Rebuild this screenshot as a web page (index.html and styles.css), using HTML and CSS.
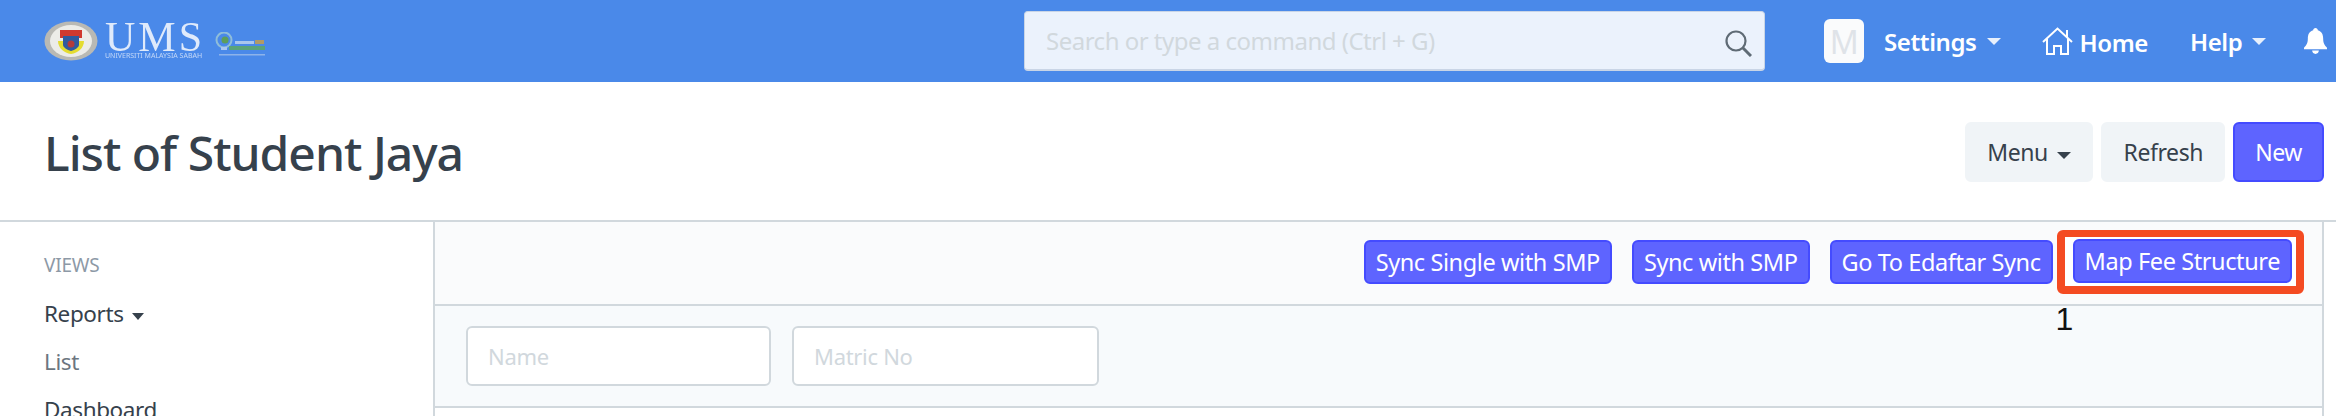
FILE: index.html
```html
<!DOCTYPE html>
<html lang="en">
<head>
    <meta charset="UTF-8">
    <meta name="viewport" content="width=device-width, initial-scale=1.0">
    <title>List of Student Jaya</title>
    <link rel="stylesheet" href="styles.css">
</head>
<body>
    <nav class="navbar">
        <div class="logo">
            <svg class="logo-crest" viewBox="0 0 54 40" width="54" height="40">
                <ellipse cx="27" cy="20" rx="26.500" ry="19.500" fill="#b9b9b4"/>
                <ellipse cx="27" cy="20" rx="21" ry="16" fill="#ecece8"/>
                <path d="M16 9h22v8H16z" fill="#d0392f"/>
                <path d="M14 20h26c0 7-6 12-13 13-7-1-13-6-13-13z" fill="#e4dc30"/>
                <path d="M19 15h16v9c0 2-4 5-8 6-4-1-8-4-8-6z" fill="#2f5a9f"/>
                <circle cx="27" cy="23" r="3.500" fill="#b33a3a"/>
            </svg>
            <div class="logo-word">
                <span class="logo-ums">UMS</span>
                <span class="logo-sub">UNIVERSITI MALAYSIA SABAH</span>
            </div>
            <svg class="logo-green" viewBox="0 0 52 25" width="52" height="25">
                <circle cx="9" cy="8" r="7.500" fill="none" stroke="#8fbdd9" stroke-width="2"/>
                <circle cx="10" cy="8" r="3.500" fill="#5d9e5a"/>
                <rect x="20" y="9" width="19" height="3" fill="#a9c6ee"/>
                <rect x="40" y="8" width="9" height="4" fill="#b09a66"/>
                <rect x="6" y="15" width="6" height="3" fill="#a9c6ee"/>
                <rect x="14" y="14" width="36" height="4" fill="#5aa37a"/>
                <rect x="4" y="22" width="46" height="1.500" fill="#8db3ea"/>
            </svg>
        </div>
        <div class="search">
            <input class="search-input" type="text" placeholder="Search or type a command (Ctrl + G)">
            <svg class="search-icon" viewBox="0 0 28 28" width="28" height="28">
                <circle cx="12" cy="12" r="9.500" fill="none" stroke="#5f6b75" stroke-width="2.200"/>
                <path d="M19 19l8 8" stroke="#5f6b75" stroke-width="3"/>
            </svg>
        </div>
        <div class="nav-right">
            <span class="avatar">M</span>
            <a class="nav-link nav-settings">Settings <i class="caret caret-white"></i></a>
            <a class="nav-link nav-home">
                <svg viewBox="0 0 31 28" width="31" height="28">
                    <path d="M1 15L15.500 1.500 30 15M25 10V3M5 12v15h7v-8h7v8h7V12" fill="none" stroke="#fff" stroke-width="2"/>
                </svg>
                <span>Home</span>
            </a>
            <a class="nav-link nav-help">Help <i class="caret caret-white"></i></a>
            <svg class="bell" viewBox="0 0 24 27" width="23" height="26">
                <path d="M12 0c1.400 0 2.400 1 2.400 2.400 4 1 5.600 4.400 5.600 8.600 0 5 1.600 7.400 4 9.500v1.500H0v-1.500c2.400-2.100 4-4.500 4-9.500 0-4.200 1.600-7.600 5.600-8.600C9.600 1 10.600 0 12 0zM8.500 23.500h7C15.500 25.500 14 27 12 27s-3.500-1.500-3.500-3.500z" fill="#fff"/>
            </svg>
        </div>
    </nav>

    <header class="page-head">
        <h1>List of Student Jaya</h1>
        <div class="page-actions">
            <button class="btn btn-default btn-menu">Menu <i class="caret caret-dark"></i></button>
            <button class="btn btn-default">Refresh</button>
            <button class="btn btn-primary">New</button>
        </div>
    </header>

    <div class="layout">
        <aside class="sidebar">
            <div class="sidebar-label">VIEWS</div>
            <div class="sidebar-item">Reports <i class="caret caret-dark caret-small"></i></div>
            <div class="sidebar-item sidebar-muted">List</div>
            <div class="sidebar-item">Dashboard</div>
        </aside>
        <main class="main">
            <div class="toolbar">
                <button class="btn btn-primary btn-sm">Sync Single with SMP</button>
                <button class="btn btn-primary btn-sm">Sync with SMP</button>
                <button class="btn btn-primary btn-sm">Go To Edaftar Sync</button>
                <div class="marked">
                    <button class="btn btn-primary btn-sm">Map Fee Structure</button>
                    <span class="marked-num">1</span>
                </div>
            </div>
            <div class="filters">
                <input class="filter-input" type="text" placeholder="Name">
                <input class="filter-input filter-wide" type="text" placeholder="Matric No">
            </div>
        </main>
    </div>
</body>
</html>
```
FILE: styles.css
```css
* {
    box-sizing: border-box;
}
html, body {
    height: 416px;
    overflow: hidden;
}
body {
    margin: 0;
    font-family: "Noto Sans", "Open Sans", sans-serif;
    font-size: 23px;
    letter-spacing: -0.4px;
    color: #36414c;
    background: #fff;
}
.navbar {
    height: 82px;
    background: #4a89e9;
    display: flex;
    align-items: center;
}
.logo {
    width: 1024px;
    padding-left: 44px;
    display: flex;
    align-items: center;
    filter: blur(0.5px);
}
.logo-crest {
    flex: none;
}
.logo-word {
    display: flex;
    flex-direction: column;
    align-items: flex-start;
    margin-left: 7px;
    color: #dfeafb;
}
.logo-ums {
    font-family: "Liberation Serif", serif;
    font-size: 42px;
    line-height: 30px;
    letter-spacing: 3px;
}
.logo-sub {
    font-size: 7px;
    line-height: 8px;
    letter-spacing: 0;
    white-space: nowrap;
    opacity: 0.8;
}
.logo-green {
    margin-left: 10px;
    margin-top: 7px;
}
.search {
    width: 741px;
    height: 60px;
    position: relative;
}
.search-input {
    width: 100%;
    height: 100%;
    padding: 0 60px 0 21px;
    border: 1px solid #c9d5e6;
    border-bottom-width: 2px;
    border-radius: 4px;
    background: #ebf2fc;
    font: inherit;
    font-size: 24px;
    letter-spacing: -0.5px;
    outline: none;
}
.search-input::placeholder {
    color: #d1d8dd;
}
.search-icon {
    position: absolute;
    right: 13px;
    top: 18px;
}
.nav-right {
    flex: 1;
    display: flex;
    align-items: center;
    padding-left: 59px;
    white-space: nowrap;
}
.avatar {
    width: 40px;
    height: 44px;
    border-radius: 6px;
    background: #fafbfc;
    color: #dfe3e8;
    font-size: 32px;
    display: flex;
    align-items: center;
    justify-content: center;
}
.nav-link {
    color: #fff;
    font-size: 24px;
    font-weight: 600;
    display: flex;
    align-items: center;
}
.nav-settings {
    margin-left: 20px;
}
.nav-home {
    margin-left: 41px;
    gap: 7px;
}
.nav-home span {
    padding-top: 3px;
}
.nav-help {
    margin-left: 42px;
}
.bell {
    margin-left: 38px;
    flex: none;
}
.caret {
    display: inline-block;
    width: 0;
    height: 0;
    border-left: 7px solid transparent;
    border-right: 7px solid transparent;
    border-top: 7px solid;
    margin-left: 10px;
}
.caret-white {
    border-top-color: #e8f0fc;
}
.caret-dark {
    border-top-color: #36414c;
    vertical-align: 2px;
    margin-left: 4px;
}
.caret-small {
    border-left-width: 6px;
    border-right-width: 6px;
    margin-left: 3px;
}
.page-head {
    height: 138px;
    padding: 2px 12px 0 44px;
    display: flex;
    align-items: center;
    justify-content: space-between;
}
h1 {
    margin: 0;
    font-size: 48px;
    font-weight: 500;
    letter-spacing: -1px;
    color: #36414c;
}
.page-actions {
    display: flex;
    gap: 8px;
}
.btn {
    font: inherit;
    letter-spacing: inherit;
    border-radius: 6px;
    border: 2px solid transparent;
    cursor: pointer;
    white-space: nowrap;
}
.page-actions .btn {
    height: 60px;
    padding: 0 20px;
}
.btn-default {
    background: #f0f4f7;
    border-color: #f0f4f7;
    color: #36414c;
}
.btn-primary {
    background: #5e64ff;
    border-color: #444bff;
    color: #fff;
}
.layout {
    display: flex;
    border-top: 2px solid #d1d8dd;
    height: 196px;
}
.sidebar {
    width: 435px;
    padding: 32px 0 0 44px;
    border-right: 2px solid #d1d8dd;
    flex: none;
}
.sidebar-label {
    font-size: 19px;
    color: #8d99a6;
    line-height: 22px;
    letter-spacing: -0.2px;
}
.sidebar-item {
    font-size: 22.500px;
    line-height: 30px;
    margin-top: 18px;
    white-space: nowrap;
}
.sidebar-label + .sidebar-item {
    margin-top: 23px;
}
.sidebar-muted {
    color: #6c7680;
}
.main {
    flex: none;
    width: 1889px;
    border-right: 2px solid #d1d8dd;
    display: flex;
    flex-direction: column;
}
.toolbar {
    height: 84px;
    background: #fafbfc;
    border-bottom: 2px solid #d1d8dd;
    display: flex;
    justify-content: flex-end;
    align-items: flex-start;
    gap: 20px;
    padding: 18px 18px 0 0;
}
.btn-sm {
    height: 44px;
    padding: 0 10px;
    font-size: 23.500px;
}
.marked {
    position: relative;
    margin: -10px 0 0 -16px;
    padding: 2px 4px 3px 8px;
    border: solid #f44b22;
    border-width: 7px 8px 8px;
    border-radius: 6px;
    background: #fff;
}
.marked .btn {
    display: block;
}
.marked-num {
    position: absolute;
    left: -9px;
    top: 64px;
    font-family: "Liberation Sans", sans-serif;
    font-size: 32px;
    line-height: 36px;
    letter-spacing: 0;
    color: #111;
}
.filters {
    height: 102px;
    background: #f7fafc;
    border-bottom: 2px solid #d1d8dd;
    display: flex;
    gap: 21px;
    padding: 20px 0 0 31px;
}
.filter-input {
    width: 305px;
    height: 60px;
    padding: 0 20px;
    border: 2px solid #d1d8dd;
    border-radius: 6px;
    background: #fff;
    font: inherit;
    font-size: 22px;
    letter-spacing: -0.3px;
    outline: none;
}
.filter-wide {
    width: 307px;
}
.filter-input::placeholder {
    color: #d1d8dd;
}
```
